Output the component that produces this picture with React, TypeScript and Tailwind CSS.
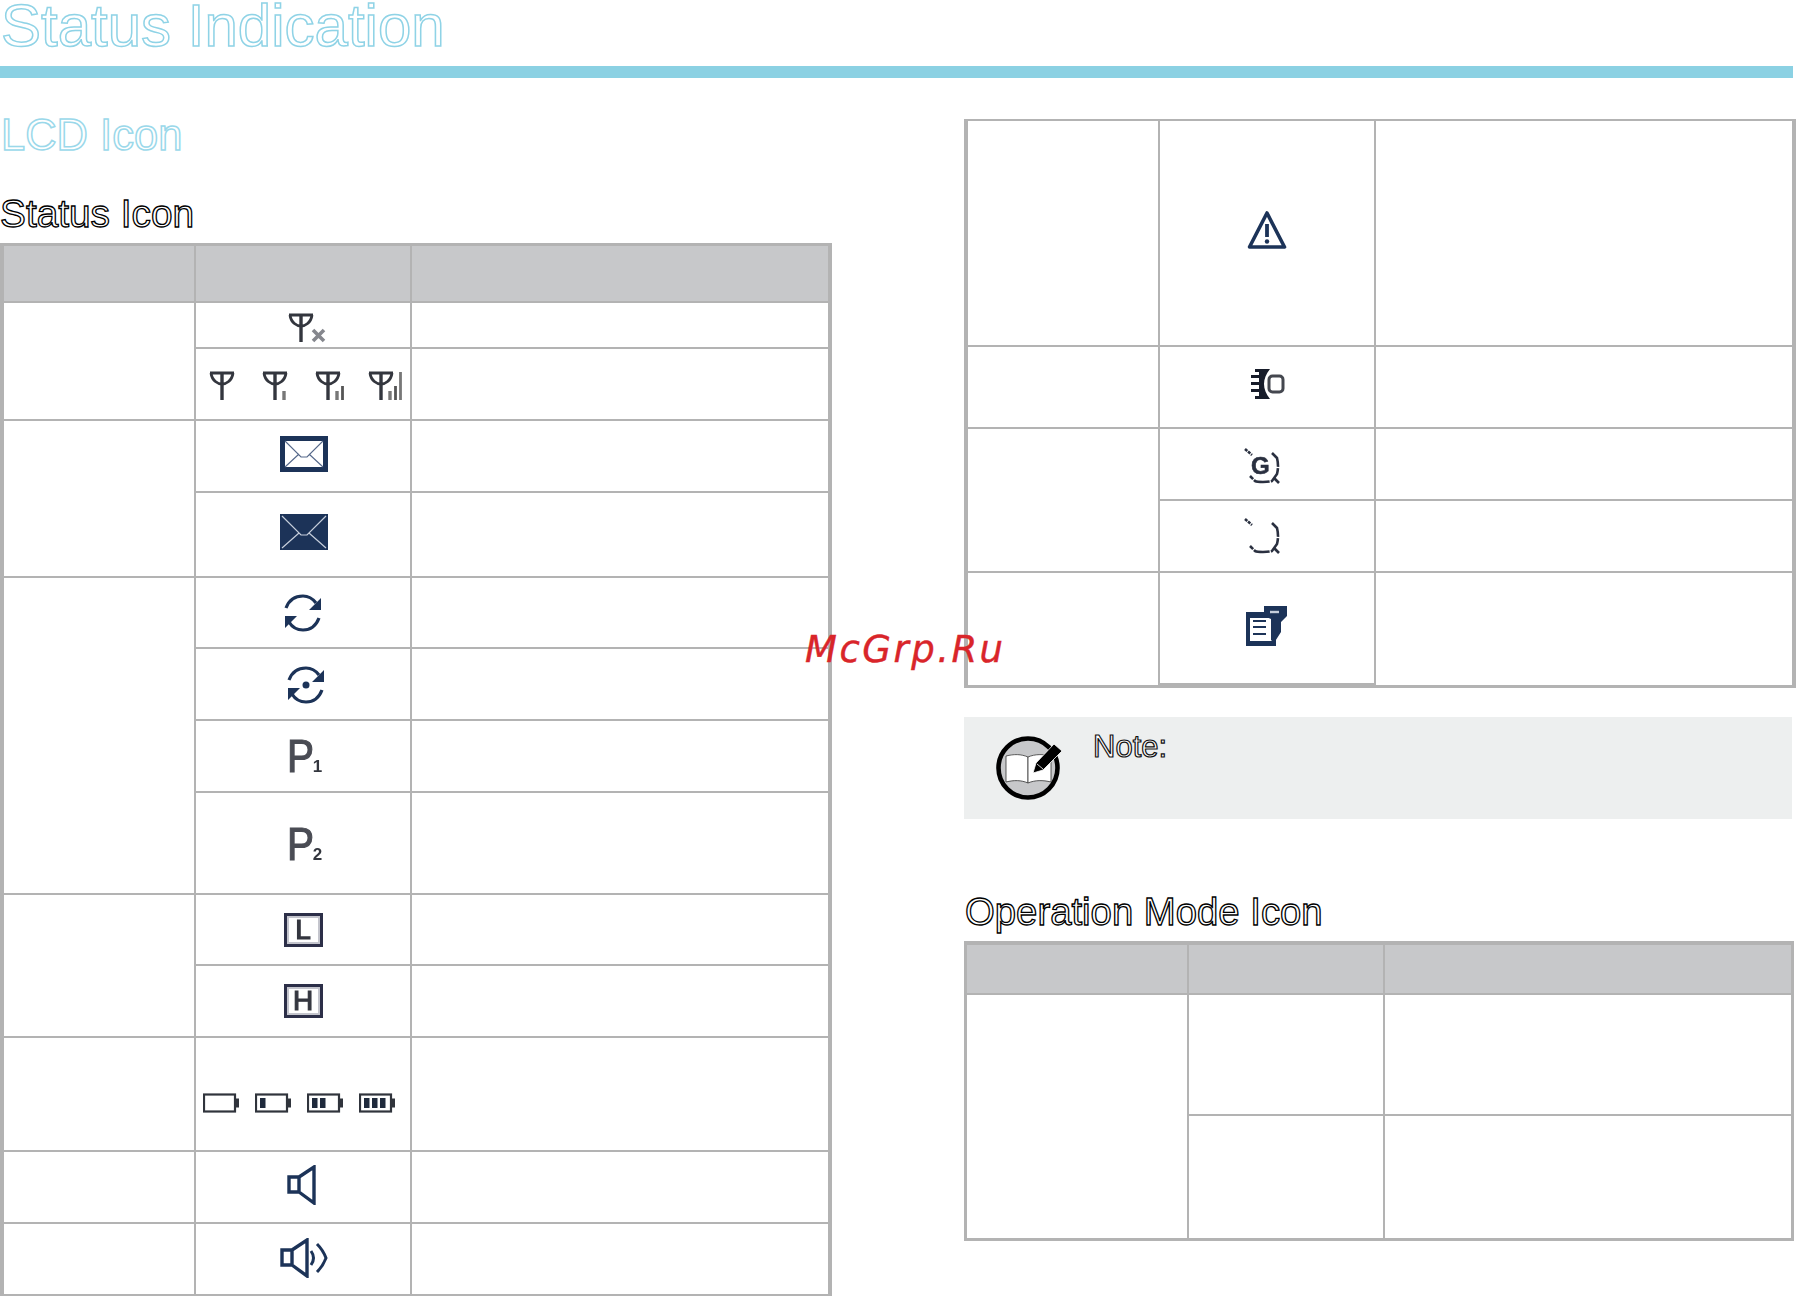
const frame = "stroke-[#1c3358]";
const soft = "blur-[0.4px]";

function Antenna({ bars = 0, cross = false }: { bars?: number; cross?: boolean }) {
  return (
    <svg width="42" height="36" viewBox="0 0 42 36" className={`${soft} text-[#33363e]`}>
      <g fill="none" stroke="currentColor" strokeWidth="2.8">
        <path d="M3 6h24M4 6c1 8 7 11 11 11s10-3 11-11" />
        <path d="M15 6v27" strokeWidth="3.4" />
      </g>
      {cross && <path d="M27 21l11 11M38 21L27 32" stroke="#85878d" strokeWidth="3.6" />}
      {bars > 0 && <path d="M24 24v9" stroke="#777" strokeWidth="3.4" />}
      {bars > 1 && <path d="M29.5 19v14" stroke="#555" strokeWidth="2.8" />}
      {bars > 2 && <path d="M34.5 5v28" stroke="#777" strokeWidth="2.8" />}
    </svg>
  );
}

function Mail({ filled = false }: { filled?: boolean }) {
  return (
    <svg width="48" height="36" viewBox="0 0 48 36">
      {filled ? (
        <>
          <rect width="48" height="36" fill="#1c3358" />
          <path d="M2 2l19 19h6L46 2M2 34l17-15M46 34L29 19" fill="none" stroke="#c6cedb" strokeWidth="1.2" />
        </>
      ) : (
        <>
          <rect x="2.5" y="2.5" width="43" height="31" fill="#fff" stroke="#1c3358" strokeWidth="5" />
          <path d="M5 5l16 16h6L43 5M5 31l14-13M43 31L29 18" fill="none" stroke="#55688a" strokeWidth="1.1" />
        </>
      )}
    </svg>
  );
}

function Sync({ dot = false }: { dot?: boolean }) {
  return (
    <svg width="40" height="40" viewBox="0 0 40 40">
      <g fill="none" className={frame} strokeWidth="3.2">
        <path d="M3 15C6 7 12 3 20 3c6 0 10 3 13 7" />
        <path d="M36 25c-3 8-9 12-16 12-6 0-11-3-14-8" />
      </g>
      <path d="M38 5v12H26zM2 35V23h12z" fill="#1c3358" />
      {dot && <circle cx="20" cy="20" r="3.5" fill="#1c3358" />}
    </svg>
  );
}

function Preset({ n }: { n: string }) {
  return (
    <div className={`${soft} flex h-[36px] w-[34px] items-end leading-none text-[#4a4c54]`}>
      <span className="-mr-[5px] origin-left scale-x-[0.88] text-[46px] leading-[36px] [-webkit-text-stroke:1.2px_#4a4c54]">P</span>
      <span className="text-[17px] font-bold leading-[15px] text-[#33363e]">{n}</span>
    </div>
  );
}

function Power({ l }: { l: string }) {
  return (
    <div className={`${soft} flex h-[34px] w-[39px] items-center justify-center border-[3px] border-[#2c2f48] text-[28px] leading-none text-[#34363f] outline-2 -outline-offset-[5px] outline-[#c4c5cd] [-webkit-text-stroke:1.2px_#34363f]`}>
      {l}
    </div>
  );
}

function Battery({ level }: { level: number }) {
  return (
    <svg width="36" height="20" viewBox="0 0 36 20" className={soft}>
      <rect x="1" y="1.5" width="31" height="17" fill="#fff" stroke="#30343c" strokeWidth="2.2" />
      <rect x="32" y="5.5" width="4" height="9" fill="#30343c" />
      {[0, 1, 2].slice(0, level).map((i) => (
        <rect key={i} x={5 + i * 8} y="5" width="5.5" height="10" fill="#1f2a3c" />
      ))}
    </svg>
  );
}

function Speaker({ waves = false }: { waves?: boolean }) {
  return (
    <svg width={waves ? 50 : 46} height="40" viewBox={waves ? "0 0 50 40" : "0 0 46 40"}>
      <g fill="none" stroke="#1c3358" strokeWidth="3.4">
        <path d="M2 12h10v15H2zM12 12L27 2v36L12 27" />
        {waves && <path d="M31 13q5 7 0 14M37 6q6 6 9 14q-3 8-9 14" strokeWidth="3" />}
      </g>
    </svg>
  );
}

function Warning() {
  return (
    <svg width="40" height="40" viewBox="0 0 40 40">
      <path d="M20 3L37.5 37h-35z" fill="none" stroke="#1c3358" strokeWidth="3.6" strokeLinejoin="round" />
      <path d="M20 14v13" stroke="#1c3358" strokeWidth="3.8" />
      <circle cx="20" cy="31.5" r="2.2" fill="#1c3358" />
    </svg>
  );
}

function Beam() {
  return (
    <svg width="38" height="40" viewBox="0 0 38 40" className={soft}>
      <path d="M7 5h15c-4 5-6 10-6 15s2 10 6 15H7v-3h4v-4H3v-3h8v-4H3v-3h8v-4H3v-3h8v-3H7z" fill="#171c2a" />
      <rect x="21" y="12" width="14" height="16" rx="3.5" fill="none" stroke="#44474f" strokeWidth="3" />
    </svg>
  );
}

function Ring({ g = false }: { g?: boolean }) {
  return (
    <svg width="42" height="46" viewBox="0 0 42 46" className={soft}>
      <g fill="none" stroke="#2a3040" strokeWidth="2.6">
        <path d="M2 6l7 6" strokeDasharray="3 1" />
        <path d="M29 10l5 5q1 4 1 8t-1 8l-5 7q-3 1-9 1t-8-1l-5-5" strokeDasharray="16 1.2" />
        <path d="M31 35l5 5" />
      </g>
      {g && <text x="8" y="31" fontSize="24" fontWeight="700" fontFamily="Liberation Sans, sans-serif" fill="#2a3040" stroke="#2a3040" strokeWidth="0.6">G</text>}
    </svg>
  );
}

function Memo() {
  return (
    <svg width="42" height="40" viewBox="0 0 42 40">
      <path d="M0 6h30v34H0z" fill="#1c3358" />
      <path d="M4 12h23v23H4z" fill="#fff" />
      <path d="M7 15h13M7 21h13M7 28h13" stroke="#1c3358" strokeWidth="2" />
      <path d="M18 0h23v10l-6 6v10l-7 11-3-3V13l-7-3z" fill="#1c3358" />
      <path d="M24 6h9" stroke="#c6cedb" strokeWidth="2.4" />
    </svg>
  );
}

function NoteIcon() {
  return (
    <svg width="70" height="66" viewBox="0 0 70 66">
      <circle cx="33" cy="32" r="29.5" fill="#c7c8ca" stroke="#000" strokeWidth="4.6" />
      <path d="M11 20c8-2 15-2 22 1v26c-7-3-14-3-22-1z" fill="#fff" stroke="#333" strokeWidth="0.8" />
      <path d="M33 21c7-3 15-3 23-1v26c-8-2-16-2-23 1z" fill="#fff" stroke="#333" strokeWidth="0.8" />
      <path d="M38 37l3-10 18-19 8 7-19 19z" fill="#000" stroke="#fff" strokeWidth="0.8" />
      <path d="M42 28l6 5" stroke="#fff" strokeWidth="0.8" />
    </svg>
  );
}

const center = "flex items-center justify-center";
const left = "border-r-2 border-b-2 border-[#b3b3b3]";
const mid = `${center} border-r-2 border-b-2 border-[#b3b3b3]`;
const right = "border-b-2 border-[#b3b3b3]";
const head = "bg-[#c7c8ca] border-[#b3b3b3]";

function StatusTable() {
  return (
    <div className="grid w-[832px] grid-cols-[192px_216px_1fr] grid-rows-[57px_46px_72px_72px_85px_71px_72px_72px_102px_71px_72px_114px_72px_72px] border-x-4 border-t-[3px] border-[#b3b3b3]">
      <div className={`${head} border-r-2 border-b-2`} />
      <div className={`${head} border-r-2 border-b-2`} />
      <div className={`${head} border-b-2`} />

      <div className={`${left} row-span-2`} />
      <div className={`${mid} border-b-1 pl-[8px] pt-1`}><Antenna cross /></div>
      <div className={`${right} border-b-1`} />
      <div className={`${mid} gap-[11px] pl-[9px] pt-[2px]`}>
        <Antenna />
        <Antenna bars={1} />
        <Antenna bars={2} />
        <Antenna bars={3} />
      </div>
      <div className={right} />

      <div className={`${left} row-span-2`} />
      <div className={`${mid} pb-1 pl-[2px]`}><Mail /></div>
      <div className={right} />
      <div className={`${mid} pb-[6px] pl-[2px]`}><Mail filled /></div>
      <div className={right} />

      <div className={`${left} row-span-4`} />
      <div className={mid}><Sync /></div>
      <div className={right} />
      <div className={`${mid} pl-[5px] pt-[2px]`}><Sync dot /></div>
      <div className={right} />
      <div className={`${mid} pl-[2px]`}><Preset n="1" /></div>
      <div className={right} />
      <div className={`${mid} pl-[2px] pt-[2px]`}><Preset n="2" /></div>
      <div className={right} />

      <div className={`${left} row-span-2`} />
      <div className={mid}><Power l="L" /></div>
      <div className={right} />
      <div className={mid}><Power l="H" /></div>
      <div className={right} />

      <div className={left} />
      <div className={`${mid} gap-[16px] pr-[8px] pt-[18px]`}>
        <Battery level={0} />
        <Battery level={1} />
        <Battery level={2} />
        <Battery level={3} />
      </div>
      <div className={right} />

      <div className={left} />
      <div className={`${mid} pb-[4px] pl-[14px]`}><Speaker /></div>
      <div className={right} />
      <div className={left} />
      <div className={`${mid} pb-[2px] pl-[4px]`}><Speaker waves /></div>
      <div className={right} />
    </div>
  );
}

function IconTable() {
  return (
    <div className="grid w-[832px] grid-cols-[192px_216px_1fr] grid-rows-[226px_82px_72px_72px_112px] border-x-4 border-t-2 border-b-[3px] border-[#b3b3b3]">
      <div className={left} />
      <div className={`${mid} pb-[7px]`}><Warning /></div>
      <div className={right} />
      <div className={left} />
      <div className={`${mid} pb-[6px]`}><Beam /></div>
      <div className={right} />
      <div className={`${left} row-span-2`} />
      <div className={`${mid} pr-[6px] pt-1`}><Ring g /></div>
      <div className={right} />
      <div className={`${mid} pr-[6px]`}><Ring /></div>
      <div className={right} />
      <div className="border-r-2 border-[#b3b3b3]" />
      <div className={`${mid} pb-1`}><Memo /></div>
      <div />
    </div>
  );
}

function ModeTable() {
  return (
    <div className="grid w-[830px] grid-cols-[222px_196px_1fr] grid-rows-[50px_121px_122px] border-x-[3px] border-t-4 border-b-[3px] border-[#b3b3b3]">
      <div className={`${head} border-r-2 border-b-2`} />
      <div className={`${head} border-r-2 border-b-2`} />
      <div className={`${head} border-b-2`} />
      <div className="row-span-2 border-r-2 border-[#b3b3b3]" />
      <div className={left} />
      <div className={right} />
      <div className="border-r-2 border-[#b3b3b3]" />
      <div />
    </div>
  );
}

export default function App() {
  return (
    <div className="relative h-[1296px] w-[1796px] overflow-hidden bg-white font-['Liberation_Sans',Arial,sans-serif]">
      <h1 className="h-[66px] pl-[1px] text-[60px] leading-[52px] text-transparent [-webkit-text-stroke:1.5px_#8fd3e6]">
        Status Indication
      </h1>
      <div className="h-[12px] w-[1793px] bg-[#8bd1e3]" />

      <div className="mt-[41px] flex items-start">
        <div className="w-[964px]">
          <h2 className="h-[53px] pl-[1px] text-[43.5px] leading-[32px] text-transparent [-webkit-text-stroke:1.5px_#9ad8ea]">
            LCD Icon
          </h2>
          <h3 className="h-[71px] pt-[20px] text-[38.8px] leading-[44px] text-white [-webkit-text-stroke:1.3px_#000]">
            Status Icon
          </h3>
          <StatusTable />
        </div>

        <div className="w-[832px]">
          <IconTable />
          <div className="mt-[29px] flex h-[102px] w-[828px] bg-[#edefef]">
            <div className="ml-[31px] mt-[19px]"><NoteIcon /></div>
            <div className="ml-[28px] mt-[13px] text-[31px] leading-[34px] text-white [-webkit-text-stroke:1.2px_#111]">
              Note:
            </div>
          </div>
          <h3 className="mt-[71px] h-[51px] pl-[1px] text-[38.3px] leading-[44px] text-white [-webkit-text-stroke:1.3px_#000]">
            Operation Mode Icon
          </h3>
          <ModeTable />
        </div>
      </div>

      <div className="absolute left-[805px] top-[625px] text-[37px] italic leading-[50px] tracking-[2.5px] text-[#d9252a] [-webkit-text-stroke:0.4px_#d9252a] font-['DejaVu_Sans',sans-serif]">
        McGrp.Ru
      </div>
    </div>
  );
}
